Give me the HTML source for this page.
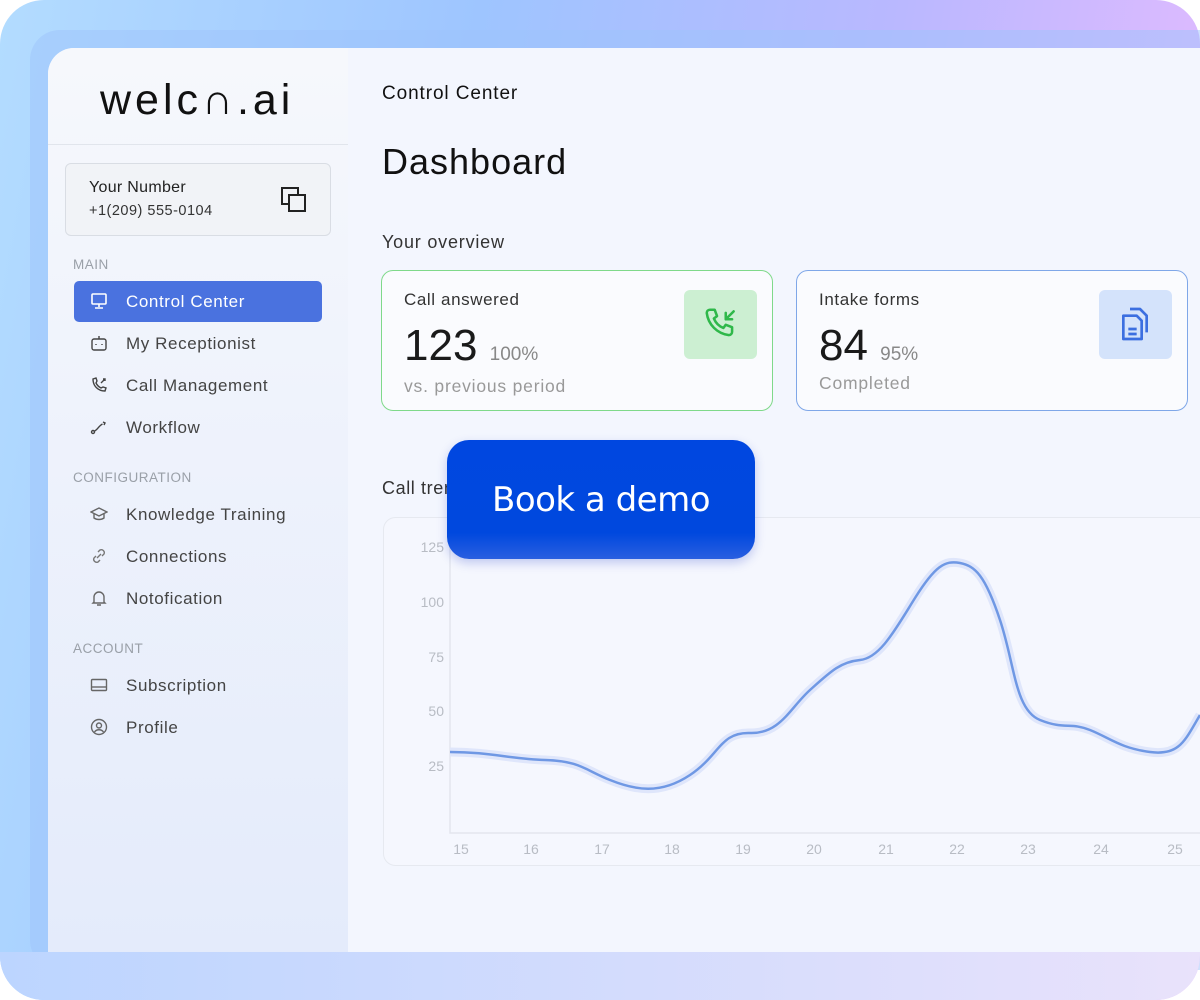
<!DOCTYPE html>
<html><head><meta charset="utf-8"><style>
*{margin:0;padding:0;box-sizing:border-box}
body{width:1200px;height:1000px;overflow:hidden;background:#fff;font-family:"Liberation Sans",sans-serif;position:relative}
.frame{position:absolute;left:0;top:0;width:1200px;height:1000px;border-radius:44px;background:linear-gradient(100deg,#b3dcff 0%,#9ec5ff 35%,#b9b8ff 65%,#eebbff 100%);overflow:hidden}
.frame:after{content:"";position:absolute;left:0;right:0;bottom:0;height:48px;background:linear-gradient(90deg,#bcd5ff,#e9e2fb);z-index:3}
.frame2{position:absolute;left:30px;top:30px;width:1170px;height:940px;border-radius:30px 0 0 30px;background:#9ec4fb;opacity:.5}
.panel{position:absolute;left:48px;top:48px;width:1152px;height:904px;border-radius:26px 0 0 0;background:#f3f6fe;overflow:hidden;z-index:2}
.side{position:absolute;left:0;top:0;width:300px;height:904px;background:linear-gradient(180deg,#f6f8fc,#e4ebfb)}
.logo{position:absolute;left:52px;top:31px;font-size:43px;color:#111;letter-spacing:4px;line-height:1}
.hr{position:absolute;left:0;top:96px;width:300px;height:1px;background:#e1e5ec}
.num{position:absolute;left:17px;top:115px;width:266px;height:73px;border:1px solid #d9dde4;border-radius:6px;background:#f1f3f7}
.num .a{position:absolute;left:23px;top:15px;font-size:16px;color:#222;letter-spacing:.3px}
.num .b{position:absolute;left:23px;top:39px;font-size:14.5px;color:#333;letter-spacing:.5px}
.sec{position:absolute;left:25px;font-size:13.5px;color:#9aa0a8;letter-spacing:.5px}
.item{position:absolute;left:26px;width:248px;height:41px;font-size:17px;letter-spacing:.6px;color:#444;display:flex;align-items:center;padding-left:52px}
.item svg{position:absolute;left:16px;top:11px}
.item.act{background:#4a72df;color:#fff;border-radius:5px}
.main{position:absolute;left:300px;top:0}
.t{position:absolute;white-space:nowrap}
.card{position:absolute;top:222px;width:392px;height:141px;border-radius:12px;background:#fafbfe}
.ic{position:absolute;top:19px;width:73px;height:69px;border-radius:6px}
.btn{position:absolute;left:447px;top:440px;width:308px;height:119px;border-radius:22px;background:linear-gradient(180deg,#0047e0 0%,#0048de 78%,#2a5fe0 100%);color:#fff;font-size:34px;display:flex;align-items:center;justify-content:center;z-index:5;box-shadow:0 4px 10px rgba(30,60,200,.25);font-family:"DejaVu Sans","Liberation Sans",sans-serif;letter-spacing:-.5px}
</style></head><body>
<div class="frame"></div>
<div class="frame2"></div>
<div class="panel">
 <div class="side">
  <div class="logo">welc<span style="letter-spacing:4px">&#x2229;</span>.ai</div>
  <div class="hr"></div>
  <div class="num"><div class="a">Your Number</div><div class="b">+1(209) 555-0104</div>
   <svg style="position:absolute;left:214px;top:22px" width="28" height="28" viewBox="0 0 28 28" fill="none" stroke="#222" stroke-width="2"><rect x="2" y="2" width="16" height="16"/><rect x="9" y="9" width="16" height="16" fill="#f1f3f7"/></svg></div>
  <div class="sec" style="top:209px">MAIN</div>
  <div class="item act" style="top:233px"><svg width="18" height="18" viewBox="0 0 18 18" fill="none" stroke="#fff" stroke-width="1.6"><rect x="2" y="2" width="14" height="10" rx="1"/><path d="M9 12v3M5 16h8"/></svg>Control Center</div>
  <div class="item" style="top:275px"><svg width="18" height="18" viewBox="0 0 18 18" fill="none" stroke="#444" stroke-width="1.4"><rect x="2" y="5" width="14" height="11" rx="2"/><path d="M9 5V2M6 10v1M12 10v1"/></svg>My Receptionist</div>
  <div class="item" style="top:317px"><svg width="18" height="18" viewBox="0 0 18 18" fill="none" stroke="#444" stroke-width="1.4"><path d="M3 3c0 7 5 12 12 12l1-3-3-1-2 1c-2-1-4-3-5-5l1-2-1-3z"/><path d="M11 7l4-4M13 3h2v2"/></svg>Call Management</div>
  <div class="item" style="top:359px"><svg width="18" height="18" viewBox="0 0 18 18" fill="none" stroke="#444" stroke-width="1.4"><circle cx="3" cy="14" r="1.5"/><path d="M4.5 13c3-1 4-5 8-7M13 4l2 1-1 2"/></svg>Workflow</div>
  <div class="sec" style="top:422px">CONFIGURATION</div>
  <div class="item" style="top:446px"><svg width="18" height="18" viewBox="0 0 18 18" fill="none" stroke="#666" stroke-width="1.4"><path d="M1 7l8-4 8 4-8 4z M4 9v4c3 2 7 2 10 0V9"/></svg>Knowledge Training</div>
  <div class="item" style="top:488px"><svg width="18" height="18" viewBox="0 0 18 18" fill="none" stroke="#777" stroke-width="1.4"><path d="M7 11l4-4M8 5l2-2a3 3 0 014 4l-2 2M10 13l-2 2a3 3 0 01-4-4l2-2"/></svg>Connections</div>
  <div class="item" style="top:530px"><svg width="18" height="18" viewBox="0 0 18 18" fill="none" stroke="#666" stroke-width="1.4"><path d="M4 13V8a5 5 0 0110 0v5l1 1H3zM7 16h4"/></svg>Notofication</div>
  <div class="sec" style="top:593px">ACCOUNT</div>
  <div class="item" style="top:617px"><svg width="18" height="18" viewBox="0 0 18 18" fill="none" stroke="#666" stroke-width="1.4"><rect x="1.5" y="3.5" width="15" height="11" rx="1"/><path d="M1.5 11h15"/></svg>Subscription</div>
  <div class="item" style="top:659px"><svg width="18" height="18" viewBox="0 0 18 18" fill="none" stroke="#666" stroke-width="1.4"><circle cx="9" cy="9" r="7.5"/><circle cx="9" cy="7.5" r="2.5"/><path d="M4.5 14c2-3 7-3 9 0"/></svg>Profile</div>
 </div>
 <div class="main">
  <div class="t" style="left:34px;top:35px;font-size:19px;letter-spacing:.9px;color:#111">Control Center</div>
  <div class="t" style="left:34px;top:93px;font-size:36px;letter-spacing:1px;color:#111">Dashboard</div>
  <div class="t" style="left:34px;top:184px;font-size:18px;letter-spacing:.8px;color:#333">Your overview</div>
  <div class="card" style="left:33px;border:1.5px solid #7fd98a">
   <div class="t" style="left:22px;top:19px;font-size:17px;letter-spacing:.6px;color:#333">Call answered</div>
   <div class="t" style="left:22px;top:50px;font-size:44px;color:#1a1a1a">123 <span style="font-size:19px;color:#888">100%</span></div>
   <div class="t" style="left:22px;top:105px;font-size:17.5px;letter-spacing:.8px;color:#999">vs. previous period</div>
   <div class="ic" style="left:302px;background:#ccefd2"><svg style="position:absolute;left:18px;top:15px" width="38" height="38" viewBox="0 0 24 24" fill="none" stroke="#2fb84a" stroke-width="1.6" stroke-linecap="round" stroke-linejoin="round"><path d="M5 3h3l1.5 4-2 1.5a11 11 0 006 6l1.5-2 4 1.5v3a2 2 0 01-2 2A16 16 0 013 5a2 2 0 012-2z"/><path d="M20 4l-5 5M15 5v4h4"/></svg></div>
  </div>
  <div class="card" style="left:448px;border:1.5px solid #7fa7e8">
   <div class="t" style="left:22px;top:19px;font-size:17px;letter-spacing:.6px;color:#333">Intake forms</div>
   <div class="t" style="left:22px;top:50px;font-size:44px;color:#1a1a1a">84 <span style="font-size:19px;color:#888">95%</span></div>
   <div class="t" style="left:22px;top:102px;font-size:17.5px;letter-spacing:.8px;color:#999">Completed</div>
   <div class="ic" style="left:302px;background:#d4e3fb"><svg style="position:absolute;left:16px;top:14px" width="40" height="40" viewBox="0 0 24 24" fill="none" stroke="#3c6fe0" stroke-width="1.6" stroke-linejoin="round"><path d="M9 3h6l4 4v10"/><path d="M5 7h8l3 3v11H5z"/><path d="M8 15h5M8 18h5"/></svg></div>
  </div>
  <div class="t" style="left:34px;top:430px;font-size:18px;letter-spacing:.6px;color:#333">Call trends</div>
 </div>
 <svg style="position:absolute;left:0;top:0" width="1152" height="904" viewBox="48 48 1152 904">
  <rect x="383.5" y="517.5" width="840" height="348" rx="12" fill="#f5f7fe" stroke="#e6e9f0"/>
  <path d="M450 540V833H1200" fill="none" stroke="#e3e6ee" stroke-width="1.5"/>
  <g font-family="Liberation Sans" font-size="14" fill="#b8bcc4" text-anchor="end">
   <text x="444" y="552">125</text><text x="444" y="607">100</text><text x="444" y="662">75</text><text x="444" y="716">50</text><text x="444" y="771">25</text></g>
  <g font-family="Liberation Sans" font-size="14" fill="#b8bcc4" text-anchor="middle">
   <text x="461" y="854">15</text><text x="531" y="854">16</text><text x="602" y="854">17</text><text x="672" y="854">18</text><text x="743" y="854">19</text><text x="814" y="854">20</text><text x="886" y="854">21</text><text x="957" y="854">22</text><text x="1028" y="854">23</text><text x="1101" y="854">24</text><text x="1175" y="854">25</text></g>
  <path d="M450 752C490 752 510 759 545 760S585 770 610 780S660 795 690 775S720 732 750 733S790 708 810 690S840 662 860 660S895 630 915 598S945 560 960 563S985 575 1000 620S1015 710 1040 720S1070 722 1090 730S1120 748 1150 752S1185 740 1200 715" fill="none" stroke="#dfe6fb" stroke-width="9"/>
  <path d="M450 752C490 752 510 759 545 760S585 770 610 780S660 795 690 775S720 732 750 733S790 708 810 690S840 662 860 660S895 630 915 598S945 560 960 563S985 575 1000 620S1015 710 1040 720S1070 722 1090 730S1120 748 1150 752S1185 740 1200 715" fill="none" stroke="#6f98e4" stroke-width="2.5"/>
 </svg>
</div>
<div class="btn">Book a demo</div>
</body></html>
